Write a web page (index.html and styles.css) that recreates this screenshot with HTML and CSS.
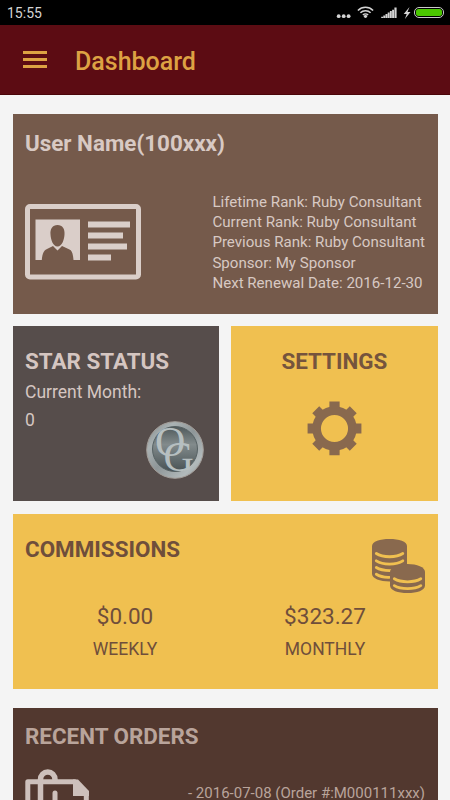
FILE: index.html
```html
<!DOCTYPE html>
<html lang="en">
<head>
    <meta charset="UTF-8">
    <meta name="viewport" content="width=device-width, initial-scale=1.0">
    <title>Dashboard</title>
    <link rel="stylesheet" href="styles.css">
</head>
<body>
    <div class="status-bar">
        <span class="clock">15:55</span>
        <svg class="status-icons" width="112" height="25" viewBox="0 0 112 25">
            <g fill="#d4d4d4">
                <circle cx="5.700" cy="16.200" r="1.900"/>
                <circle cx="10.700" cy="16.200" r="1.900"/>
                <circle cx="15.600" cy="16.200" r="1.900"/>
                <circle cx="32.500" cy="16.300" r="1.600"/>
                <path d="M48.200 18v-1.300h1.900V18zM50.300 18v-2.600h1.900V18zM52.500 18v-4h1.900v4zM54.700 18v-5.400h1.900V18zM56.900 18v-6.900h1.900V18zM59.100 18V9.700H61V18zM61.400 18V7.500h2.200V18z"/>
                <path d="M76.500 7l-5.800 7h3l-1.800 5 5.600-7h-3z"/>
            </g>
            <path d="M24.900 10.500a10.600 10.600 0 0 1 15.200 0M27.400 12.800a7.200 7.200 0 0 1 10.200 0M29.900 15a3.700 3.700 0 0 1 5.200 0" fill="none" stroke="#d4d4d4" stroke-width="1.600"/>
            <rect x="81.500" y="7.500" width="29" height="10" rx="4.500" fill="#000" stroke="#c9c9c9"/>
            <rect x="83" y="9" width="26" height="7" rx="2.500" fill="#4bc800"/>
        </svg>
    </div>
    <div class="header">
        <div class="menu">
            <span></span>
            <span></span>
            <span></span>
        </div>
        <h1>Dashboard</h1>
    </div>
    <div class="container">
        <div class="card profile">
            <h2>User Name(100xxx)</h2>
            <div class="profile-row">
                <svg width="116" height="76" viewBox="0 0 116 76">
                    <rect x="2.500" y="2.500" width="111" height="70.500" rx="2.500" fill="none" stroke="#dacec9" stroke-width="5"/>
                    <path d="M10.500 15.500H55V56h-6.500c-.5-6-1.500-9.500-4-10.500L37 42l-4.500 4.500L28 42l-7 3.500c-2.500 1.500-3.700 4.500-4.200 10.500h-6.300z" fill="#dacec9"/>
                    <path d="M32.500 21c5 0 7.500 4 7 9.500-.3 5-2.500 12-7 12s-6.700-7-7-12c-.5-5.500 2-9.500 7-9.500z" fill="#755a4b"/>
                    <path d="M63 17.500h42v6H63zM63 28.500h35v6H63zM63 39.500h39v6H63zM63 50.500h23v6H63z" fill="#dacec9"/>
                </svg>
                <div class="ranks">
                    <div>Lifetime Rank: Ruby Consultant</div>
                    <div>Current Rank: Ruby Consultant</div>
                    <div>Previous Rank: Ruby Consultant</div>
                    <div>Sponsor: My Sponsor</div>
                    <div>Next Renewal Date: 2016-12-30</div>
                </div>
            </div>
        </div>
        <div class="row">
            <div class="card star">
                <h2>STAR STATUS</h2>
                <p>Current Month:</p>
                <p>0</p>
                <svg class="badge" width="58" height="58" viewBox="0 0 58 58">
                    <defs>
                        <linearGradient id="rim" x1="0" y1="0" x2="1" y2="1">
                            <stop offset="0" stop-color="#7d8587"/>
                            <stop offset=".25" stop-color="#aab2b3"/>
                            <stop offset=".5" stop-color="#8e9698"/>
                            <stop offset=".8" stop-color="#b2babb"/>
                            <stop offset="1" stop-color="#8b9395"/>
                        </linearGradient>
                        <linearGradient id="face" x1="0" y1="0" x2="0" y2="1">
                            <stop offset="0" stop-color="#4f595b"/>
                            <stop offset=".4" stop-color="#828b8c"/>
                            <stop offset="1" stop-color="#485254"/>
                        </linearGradient>
                    </defs>
                    <circle cx="29" cy="29" r="28.300" fill="url(#rim)" stroke="#a39d98"/>
                    <circle cx="29" cy="28" r="22.500" fill="url(#face)" stroke="#566163"/>
                    <text x="9" y="35">O</text>
                    <text x="17.500" y="49.500">G</text>
                </svg>
            </div>
            <div class="card settings">
                <h2>SETTINGS</h2>
                <svg width="55" height="55" viewBox="-28 -28 56 56">
                    <circle r="18.200" fill="none" stroke="#89694e" stroke-width="8.800"/>
                    <g fill="#89694e">
                        <path d="M-5.200-27.400H5.200V-20H-5.200zM-5.200 20H5.200v7.200H-5.200zM-27.400-5.200h7.400V5.200h-7.400zM20-5.200h7.400V5.200H20z"/>
                        <path transform="rotate(45)" d="M-5-27H5v7.500H-5zM-5 19.500H5V27H-5zM-27-5h7.500V5H-27zM19.500-5H27V5h-7.500z"/>
                    </g>
                </svg>
            </div>
        </div>
        <div class="card commissions">
            <div class="card-top">
                <h2>COMMISSIONS</h2>
                <svg width="53" height="54" viewBox="0 0 53 54">
                    <path d="M0 7C0 2.500 8 0 17.500 0S35 2.500 35 7v28c0 4.500-8 7.500-17.500 7.500S0 39.500 0 35z" fill="#89694e"/>
                    <g fill="none" stroke="#f0c050" stroke-width="2.800" stroke-linecap="round">
                        <path d="M4.300 14.500c6.500 4.300 20 4.300 26.500 0M4.300 21.800c6.500 4.300 20 4.300 26.500 0M4.300 28.500c4 2.600 9 3.300 16 3M4.300 35.300c4 2.500 8 3.200 13 3"/>
                    </g>
                    <path d="M18 33c0-5 8-8 17.500-8S53 28 53 33v13.500c0 5-8 7.500-17.500 7.500S18 51.500 18 46.500z" fill="#89694e"/>
                    <g fill="none" stroke="#f0c050" stroke-width="2.800" stroke-linecap="round">
                        <path d="M22.300 39.800c6.500 4 20 4 26.500 0M22.300 46.600c6.500 4 20 4 26.500 0"/>
                    </g>
                </svg>
            </div>
            <div class="amounts">
                <div>
                    <div class="amount">$0.00</div>
                    <div class="period">WEEKLY</div>
                </div>
                <div>
                    <div class="amount">$323.27</div>
                    <div class="period">MONTHLY</div>
                </div>
            </div>
        </div>
        <div class="card orders">
            <h2>RECENT ORDERS</h2>
            <div class="orders-row">
                <svg width="66" height="80" viewBox="0 0 66 80">
                    <g fill="none" stroke="#cdc0bb" stroke-width="5">
                        <path d="M2.800 80V12.800h47l11.500 11.700V80" stroke-linejoin="round"/>
                        <path d="M15.500 80V10.500a7.200 7.500 0 0 1 14.500 0V13" stroke-width="5.500"/>
                        <path d="M30 80V24" stroke-linecap="round"/>
                    </g>
                    <path d="M48 10.500h5L64 22v5H48z" fill="#cdc0bb"/>
                </svg>
                <div class="order">- 2016-07-08 (Order #:M000111xxx)</div>
            </div>
        </div>
    </div>
</body>
</html>
```

FILE: styles.css
```css
* {
    box-sizing: border-box;
}
body {
    margin: 0;
    height: 800px;
    overflow: hidden;
    background: #f4f4f4;
    font-family: Roboto, sans-serif;
}
h1, h2, p {
    margin: 0;
}
svg {
    display: block;
    flex: none;
}
.status-bar {
    display: flex;
    justify-content: space-between;
    height: 25px;
    padding: 0 5px 0 7px;
    background: #000;
}
.clock {
    font-size: 14px;
    line-height: 27px;
    color: #d4d4d4;
}
.header {
    display: flex;
    align-items: center;
    height: 70px;
    padding-left: 23px;
    background: #5c0c13;
    border-bottom: 1px solid #4a0509;
}
.menu {
    display: flex;
    flex-direction: column;
    gap: 4px;
    width: 24px;
    margin-right: 28px;
}
.menu span {
    height: 3px;
    background: #dda243;
}
.header h1 {
    font-size: 25px;
    font-weight: 500;
    line-height: 30px;
    color: #dda243;
    padding-top: 4px;
}
.container {
    display: flex;
    flex-direction: column;
    padding: 19px 12.500px 0;
}
.card {
    padding: 0 12.500px;
}
.card h2 {
    font-size: 22.400px;
    font-weight: 700;
    line-height: 28px;
}
.profile {
    height: 200px;
    padding-top: 15px;
    background: #755a4b;
    color: #d8c9c3;
}
.profile-row {
    display: flex;
    justify-content: space-between;
    margin-top: 34px;
}
.profile-row svg {
    margin-top: 13px;
}
.ranks {
    padding-top: 0.500px;
    font-size: 15.100px;
    line-height: 20.400px;
    white-space: nowrap;
}
.row {
    display: grid;
    grid-template-columns: 1fr 1fr;
    gap: 12.500px;
    margin: 12px 0 13px;
}
.star {
    position: relative;
    height: 175px;
    padding-top: 21px;
    background: #564d4b;
    color: #d5c6c1;
}
.star h2 {
    margin-bottom: 4px;
}
.star p {
    font-size: 17.500px;
    line-height: 27.500px;
}
.badge {
    position: absolute;
    right: 15px;
    bottom: 22px;
}
.badge text {
    font-family: "Liberation Serif", serif;
    font-size: 42px;
    fill: #b6bfc0;
}
.settings {
    display: flex;
    flex-direction: column;
    align-items: center;
    padding-top: 21px;
    background: #f0c050;
    color: #75543d;
}
.settings svg {
    margin-top: 26px;
}
.commissions {
    height: 175px;
    padding-top: 21px;
    background: #f0c050;
    color: #6f4e3b;
}
.card-top {
    display: flex;
    justify-content: space-between;
    height: 65px;
}
.card-top svg {
    margin-top: 4px;
}
.amounts {
    display: grid;
    grid-template-columns: 1fr 1fr;
    text-align: center;
}
.amount {
    font-size: 22.500px;
    line-height: 33px;
}
.period {
    font-size: 17.500px;
    line-height: 33px;
}
.orders {
    height: 92px;
    overflow: hidden;
    padding-top: 14px;
    margin-top: 19px;
    background: #52382f;
    color: #b9a49b;
}
.orders-row {
    display: flex;
    justify-content: space-between;
    margin-top: 19px;
}
.order {
    margin-top: 14px;
    font-size: 15px;
    line-height: 20px;
}
```
